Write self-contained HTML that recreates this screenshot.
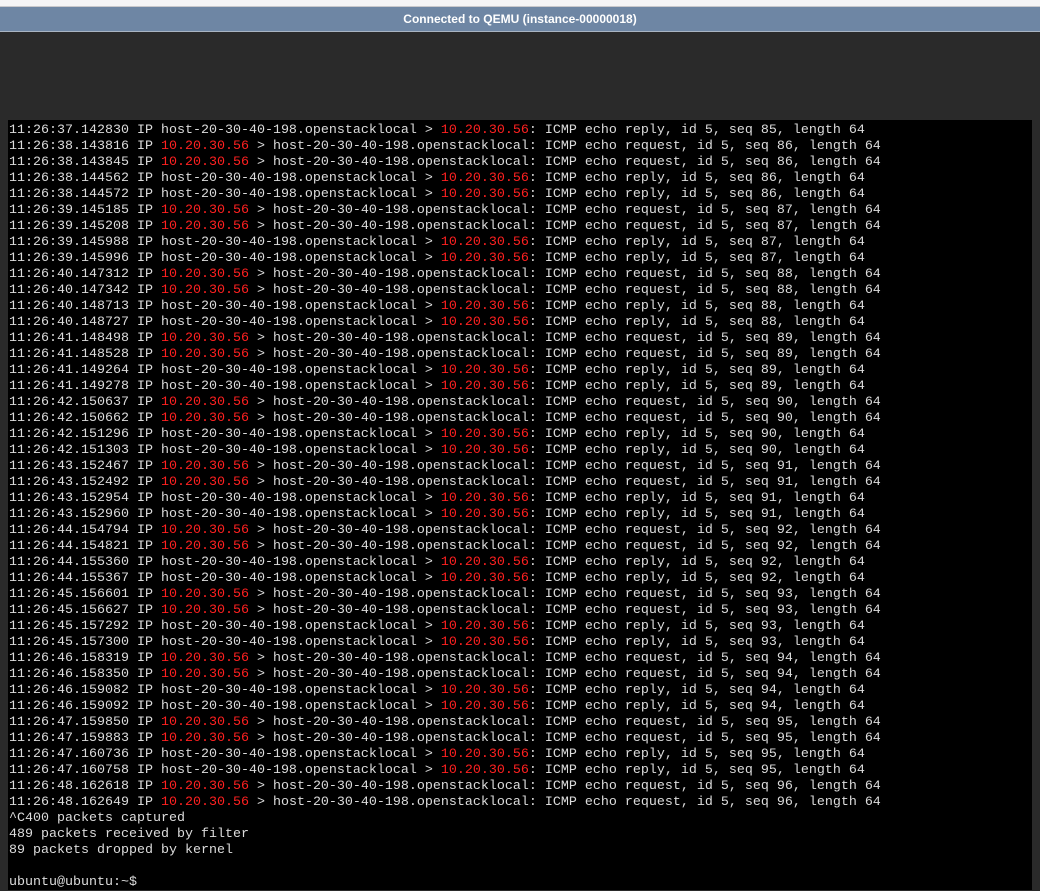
<!DOCTYPE html>
<html><head><meta charset="utf-8"><style>
html,body{margin:0;padding:0;width:1040px;height:890px;overflow:hidden;background:#2a2a2a}
#top{position:absolute;left:0;top:0;width:1040px;height:6px;background:#f4f4f6;border-bottom:1px solid #c8c8cc}
#bar{position:absolute;left:0;top:7px;width:1040px;height:24px;background:#6e86a4;border-bottom:1px solid #a9b4c2;color:#fff;font:bold 12px "Liberation Sans",sans-serif;text-align:center;line-height:24px}
#con{position:absolute;left:8px;top:120px;width:1024px;height:770px;background:#000}
pre{margin:0;position:absolute;left:1px;top:3px;font:13.33px/16px "Liberation Mono","DejaVu Sans Mono",monospace;color:#dcdcdc;letter-spacing:0}
.r{color:#ff2020}
</style></head><body>
<div id="top"></div>
<div id="bar">Connected to QEMU (instance-00000018)</div>
<div id="con"><pre>11:26:37.142830 IP host-20-30-40-198.openstacklocal &gt; <span class="r">10.20.30.56</span>: ICMP echo reply, id 5, seq 85, length 64
11:26:38.143816 IP <span class="r">10.20.30.56</span> &gt; host-20-30-40-198.openstacklocal: ICMP echo request, id 5, seq 86, length 64
11:26:38.143845 IP <span class="r">10.20.30.56</span> &gt; host-20-30-40-198.openstacklocal: ICMP echo request, id 5, seq 86, length 64
11:26:38.144562 IP host-20-30-40-198.openstacklocal &gt; <span class="r">10.20.30.56</span>: ICMP echo reply, id 5, seq 86, length 64
11:26:38.144572 IP host-20-30-40-198.openstacklocal &gt; <span class="r">10.20.30.56</span>: ICMP echo reply, id 5, seq 86, length 64
11:26:39.145185 IP <span class="r">10.20.30.56</span> &gt; host-20-30-40-198.openstacklocal: ICMP echo request, id 5, seq 87, length 64
11:26:39.145208 IP <span class="r">10.20.30.56</span> &gt; host-20-30-40-198.openstacklocal: ICMP echo request, id 5, seq 87, length 64
11:26:39.145988 IP host-20-30-40-198.openstacklocal &gt; <span class="r">10.20.30.56</span>: ICMP echo reply, id 5, seq 87, length 64
11:26:39.145996 IP host-20-30-40-198.openstacklocal &gt; <span class="r">10.20.30.56</span>: ICMP echo reply, id 5, seq 87, length 64
11:26:40.147312 IP <span class="r">10.20.30.56</span> &gt; host-20-30-40-198.openstacklocal: ICMP echo request, id 5, seq 88, length 64
11:26:40.147342 IP <span class="r">10.20.30.56</span> &gt; host-20-30-40-198.openstacklocal: ICMP echo request, id 5, seq 88, length 64
11:26:40.148713 IP host-20-30-40-198.openstacklocal &gt; <span class="r">10.20.30.56</span>: ICMP echo reply, id 5, seq 88, length 64
11:26:40.148727 IP host-20-30-40-198.openstacklocal &gt; <span class="r">10.20.30.56</span>: ICMP echo reply, id 5, seq 88, length 64
11:26:41.148498 IP <span class="r">10.20.30.56</span> &gt; host-20-30-40-198.openstacklocal: ICMP echo request, id 5, seq 89, length 64
11:26:41.148528 IP <span class="r">10.20.30.56</span> &gt; host-20-30-40-198.openstacklocal: ICMP echo request, id 5, seq 89, length 64
11:26:41.149264 IP host-20-30-40-198.openstacklocal &gt; <span class="r">10.20.30.56</span>: ICMP echo reply, id 5, seq 89, length 64
11:26:41.149278 IP host-20-30-40-198.openstacklocal &gt; <span class="r">10.20.30.56</span>: ICMP echo reply, id 5, seq 89, length 64
11:26:42.150637 IP <span class="r">10.20.30.56</span> &gt; host-20-30-40-198.openstacklocal: ICMP echo request, id 5, seq 90, length 64
11:26:42.150662 IP <span class="r">10.20.30.56</span> &gt; host-20-30-40-198.openstacklocal: ICMP echo request, id 5, seq 90, length 64
11:26:42.151296 IP host-20-30-40-198.openstacklocal &gt; <span class="r">10.20.30.56</span>: ICMP echo reply, id 5, seq 90, length 64
11:26:42.151303 IP host-20-30-40-198.openstacklocal &gt; <span class="r">10.20.30.56</span>: ICMP echo reply, id 5, seq 90, length 64
11:26:43.152467 IP <span class="r">10.20.30.56</span> &gt; host-20-30-40-198.openstacklocal: ICMP echo request, id 5, seq 91, length 64
11:26:43.152492 IP <span class="r">10.20.30.56</span> &gt; host-20-30-40-198.openstacklocal: ICMP echo request, id 5, seq 91, length 64
11:26:43.152954 IP host-20-30-40-198.openstacklocal &gt; <span class="r">10.20.30.56</span>: ICMP echo reply, id 5, seq 91, length 64
11:26:43.152960 IP host-20-30-40-198.openstacklocal &gt; <span class="r">10.20.30.56</span>: ICMP echo reply, id 5, seq 91, length 64
11:26:44.154794 IP <span class="r">10.20.30.56</span> &gt; host-20-30-40-198.openstacklocal: ICMP echo request, id 5, seq 92, length 64
11:26:44.154821 IP <span class="r">10.20.30.56</span> &gt; host-20-30-40-198.openstacklocal: ICMP echo request, id 5, seq 92, length 64
11:26:44.155360 IP host-20-30-40-198.openstacklocal &gt; <span class="r">10.20.30.56</span>: ICMP echo reply, id 5, seq 92, length 64
11:26:44.155367 IP host-20-30-40-198.openstacklocal &gt; <span class="r">10.20.30.56</span>: ICMP echo reply, id 5, seq 92, length 64
11:26:45.156601 IP <span class="r">10.20.30.56</span> &gt; host-20-30-40-198.openstacklocal: ICMP echo request, id 5, seq 93, length 64
11:26:45.156627 IP <span class="r">10.20.30.56</span> &gt; host-20-30-40-198.openstacklocal: ICMP echo request, id 5, seq 93, length 64
11:26:45.157292 IP host-20-30-40-198.openstacklocal &gt; <span class="r">10.20.30.56</span>: ICMP echo reply, id 5, seq 93, length 64
11:26:45.157300 IP host-20-30-40-198.openstacklocal &gt; <span class="r">10.20.30.56</span>: ICMP echo reply, id 5, seq 93, length 64
11:26:46.158319 IP <span class="r">10.20.30.56</span> &gt; host-20-30-40-198.openstacklocal: ICMP echo request, id 5, seq 94, length 64
11:26:46.158350 IP <span class="r">10.20.30.56</span> &gt; host-20-30-40-198.openstacklocal: ICMP echo request, id 5, seq 94, length 64
11:26:46.159082 IP host-20-30-40-198.openstacklocal &gt; <span class="r">10.20.30.56</span>: ICMP echo reply, id 5, seq 94, length 64
11:26:46.159092 IP host-20-30-40-198.openstacklocal &gt; <span class="r">10.20.30.56</span>: ICMP echo reply, id 5, seq 94, length 64
11:26:47.159850 IP <span class="r">10.20.30.56</span> &gt; host-20-30-40-198.openstacklocal: ICMP echo request, id 5, seq 95, length 64
11:26:47.159883 IP <span class="r">10.20.30.56</span> &gt; host-20-30-40-198.openstacklocal: ICMP echo request, id 5, seq 95, length 64
11:26:47.160736 IP host-20-30-40-198.openstacklocal &gt; <span class="r">10.20.30.56</span>: ICMP echo reply, id 5, seq 95, length 64
11:26:47.160758 IP host-20-30-40-198.openstacklocal &gt; <span class="r">10.20.30.56</span>: ICMP echo reply, id 5, seq 95, length 64
11:26:48.162618 IP <span class="r">10.20.30.56</span> &gt; host-20-30-40-198.openstacklocal: ICMP echo request, id 5, seq 96, length 64
11:26:48.162649 IP <span class="r">10.20.30.56</span> &gt; host-20-30-40-198.openstacklocal: ICMP echo request, id 5, seq 96, length 64
^C400 packets captured
489 packets received by filter
89 packets dropped by kernel

ubuntu@ubuntu:~$</pre></div>
</body></html>
